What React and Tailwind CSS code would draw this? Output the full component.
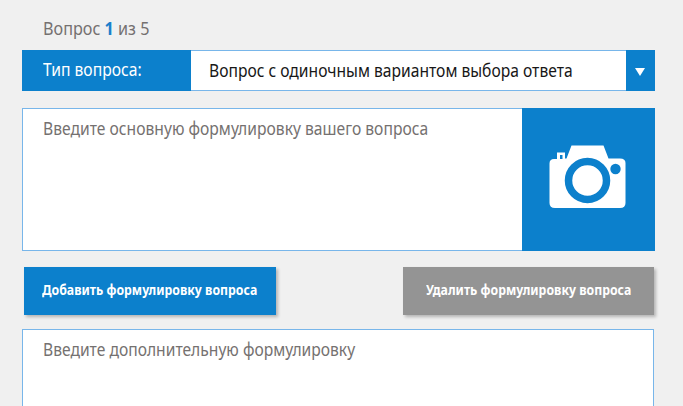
function CameraIcon() {
  return (
    <svg width="77" height="64" viewBox="0 0 77 64" aria-hidden="true">
      <path
        fill="#fff"
        fillRule="evenodd"
        d="M5 14H8V7.5H16V13.5H17.5L22.5 .5H54.5L59.5 13.5H71Q76.500 13.500 76.500 18V58Q76.500 63 71 63H6Q.5 63 .5 58V18.500Q.5 14 5 14ZM11 10V14H13.500V10Z"
      />
      <circle cx="38.500" cy="35.500" r="19" fill="#fff" stroke="#0c80cc" strokeWidth="7.500" />
      <circle cx="66.500" cy="24" r="5.200" fill="#0c80cc" />
    </svg>
  );
}

const bodyText = "inline-block origin-left whitespace-nowrap text-[17.5px] leading-6";

export default function App() {
  return (
    <main className="h-[406px] w-[683px] overflow-hidden bg-[#f0f0f0] pl-[22px] pt-4 font-['Noto_Sans','Open_Sans',sans-serif]">
      <p className="h-[34px] pl-[21px] text-[#757170]">
        <span className={`${bodyText} scale-x-[0.925]`}>
          Вопрос <b className="text-[#1c7fcb]">1</b> из 5
        </span>
      </p>

      <div className="flex h-[41px] w-[633px] border border-[#78b6ea] bg-white">
        <div className="-my-px -ml-px w-[169px] bg-[#0c80cc] pl-[21px] pt-[7px] text-white">
          <span className={`${bodyText} scale-x-[0.895]`}>Тип вопроса:</span>
        </div>
        <div className="flex-1 pl-[18px] pt-[7px] text-[#171717]">
          <span className={`${bodyText} scale-x-[0.893]`}>Вопрос с одиночным вариантом выбора ответа</span>
        </div>
        <button className="-my-px -mr-px flex w-[29px] items-center justify-center bg-[#0c80cc] pr-0.5" aria-label="▼">
          <svg width="10" height="8" viewBox="0 0 10 8" className="mt-0.5">
            <path d="M0 0H10L5 8Z" fill="#fff" />
          </svg>
        </button>
      </div>

      <div className="mt-[17px] flex h-[143px] w-[633px] border border-[#78b6ea] bg-white">
        <div className="flex-1 pl-5 pt-[7px] text-[#757170]">
          <span className={`${bodyText} scale-x-[0.895]`}>Введите основную формулировку вашего вопроса</span>
        </div>
        <div className="-my-px -mr-px w-[133px] bg-[#0c80cc] pl-[27px] pt-[37px]">
          <CameraIcon />
        </div>
      </div>

      <div className="ml-0.5 mt-4 flex h-12 w-[630px] justify-between text-[14.5px] font-bold text-white">
        <button className="w-[252px] bg-[#0c80cc] pb-[3px] pl-[18px] text-left shadow-[2px_2px_3px_#00000040]">
          <span className="inline-block origin-left scale-x-[0.848] whitespace-nowrap">Добавить формулировку вопроса</span>
        </button>
        <button className="w-[251px] bg-[#949494] pb-[3px] pl-[23px] text-left shadow-[2px_2px_3px_#00000040]">
          <span className="inline-block origin-left scale-x-[0.848] whitespace-nowrap">Удалить формулировку вопроса</span>
        </button>
      </div>

      <div className="mt-[14px] h-[90px] w-[632px] border border-[#78b6ea] bg-white pl-5 pt-[7px] text-[#757170]">
        <span className={`${bodyText} scale-x-[0.893]`}>Введите дополнительную формулировку</span>
      </div>
    </main>
  );
}
